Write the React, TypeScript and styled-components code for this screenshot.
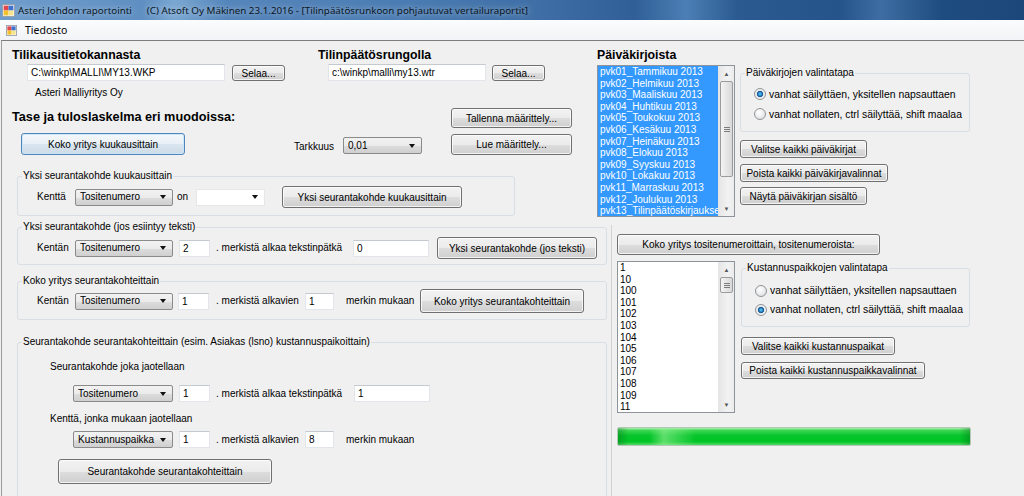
import React from 'react'
import styled, { createGlobalStyle, css } from 'styled-components'

const GlobalStyle = createGlobalStyle`
  * { box-sizing: border-box; }
  html, body {
    margin: 0;
    padding: 0;
    width: 1024px;
    height: 496px;
    overflow: hidden;
    background: #f0f0f0;
  }
  body {
    font-family: 'Liberation Sans', Arial, sans-serif;
    font-size: 10px;
    color: #000;
  }
`

const journals = [
  'pvk01_Tammikuu 2013',
  'pvk02_Helmikuu 2013',
  'pvk03_Maaliskuu 2013',
  'pvk04_Huhtikuu 2013',
  'pvk05_Toukokuu 2013',
  'pvk06_Kesäkuu 2013',
  'pvk07_Heinäkuu 2013',
  'pvk08_Elokuu 2013',
  'pvk09_Syyskuu 2013',
  'pvk10_Lokakuu 2013',
  'pvk11_Marraskuu 2013',
  'pvk12_Joulukuu 2013',
  'pvk13_Tilinpäätöskirjaukse',
]

const costCenters = ['1', '10', '100', '101', '102', '103', '104', '105', '106', '107', '108', '109', '11']

const AppIcon = ({ size }: { size: number }) => (
  <svg width={size} height={size} viewBox="0 0 12 12">
    <rect x="0.5" y="0.5" width="11" height="11" fill="#fff" stroke="#9aa3ad" />
    <rect x="1.5" y="1.5" width="4.5" height="4.5" fill="#e2474b" />
    <rect x="6" y="1.5" width="4.5" height="4.5" fill="#3d73cf" />
    <rect x="1.5" y="6" width="4.5" height="4.5" fill="#f2c12e" />
    <rect x="6" y="6" width="4.5" height="4.5" fill="#f7e58d" />
  </svg>
)

export default function App() {
  return (
    <>
      <GlobalStyle />
      <Window>
        <TitleBar>
          <AppIcon size={13} />
          <TitleText>Asteri Johdon raportointi</TitleText>
          <TitleText $ml={12}>
            (C) Atsoft Oy Mäkinen 23.1.2016 - [Tilinpäätösrunkoon pohjautuvat vertailuraportit]
          </TitleText>
        </TitleBar>
        <MenuBar>
          <AppIcon size={11} />
          <MenuItem>Tiedosto</MenuItem>
        </MenuBar>

        <Client>
          <TopSection>
            <LeftTop>
              <FileRow>
                <FileBlock $w={306}>
                  <Heading $size={12.3}>Tilikausitietokannasta</Heading>
                  <PathRow $indent={15}>
                    <TextBox $w={198}>{'C:\\winkp\\MALLI\\MY13.WKP'}</TextBox>
                    <Button $w={53} $h={16} $ml={7} $mt={1}>Selaa...</Button>
                  </PathRow>
                </FileBlock>
                <FileBlock>
                  <Heading $size={12.3}>Tilinpäätösrungolla</Heading>
                  <PathRow $indent={10}>
                    <TextBox $w={158}>{'c:\\winkp\\malli\\my13.wtr'}</TextBox>
                    <Button $w={53} $h={16} $ml={6} $mt={1}>Selaa...</Button>
                  </PathRow>
                </FileBlock>
              </FileRow>

              <CompanyName>Asteri Malliyritys Oy</CompanyName>

              <ActionRow>
                <Heading $size={12.7} $mt={2}>Tase ja tuloslaskelma eri muodoissa:</Heading>
                <Button $w={121} $h={20}>Tallenna määrittely...</Button>
              </ActionRow>

              <CommandRow>
                <Button $w={164} $h={22} $ml={9} $primary>Koko yritys kuukausittain</Button>
                <Label $w={49} $ml={109} $mt={6}>Tarkkuus</Label>
                <Combo $w={79} $mt={3}>
                  <ComboText>0,01</ComboText>
                  <ComboArrow />
                </Combo>
                <Button $w={121} $h={21} $ml={29}>Lue määrittely...</Button>
              </CommandRow>

              <GroupBox $w={498} $mt={15} $ml={5} $pb={7}>
                <Legend>Yksi seurantakohde kuukausittain</Legend>
                <GroupRow $pt={4} $pl={19}>
                  <Label $w={38}>Kenttä</Label>
                  <Combo $w={98}>
                    <ComboText>Tositenumero</ComboText>
                    <ComboArrow />
                  </Combo>
                  <Label $w={11} $ml={4}>on</Label>
                  <Combo $w={69} $ml={8} $editable>
                    <ComboText />
                    <ComboArrow />
                  </Combo>
                  <Button $w={180} $h={22} $ml={17}>Yksi seurantakohde kuukausittain</Button>
                </GroupRow>
              </GroupBox>
            </LeftTop>

            <RightTop>
              <Heading $size={12.3}>Päiväkirjoista</Heading>
              <ListRow $mt={3}>
                <ListBox $w={138}>
                  <ListItems>
                    {journals.map((name) => (
                      <ListItem key={name} $selected>
                        {name}
                      </ListItem>
                    ))}
                  </ListItems>
                  <ScrollBar>
                    <ScrollArrow>▲</ScrollArrow>
                    <ScrollTrack>
                      <Thumb $top={0} $h={96}>
                        <Grip />
                      </Thumb>
                    </ScrollTrack>
                    <ScrollArrow>▼</ScrollArrow>
                  </ScrollBar>
                </ListBox>
                <SideColumn $ml={5} $pt={2}>
                  <GroupBox $w={230} $pb={7}>
                    <Legend>Päiväkirjojen valintatapa</Legend>
                    <RadioList $pt={5}>
                      <RadioRow $h={20}>
                        <RadioDot $checked />
                        vanhat säilyttäen, yksitellen napsauttaen
                      </RadioRow>
                      <RadioRow $h={20}>
                        <RadioDot />
                        vanhat nollaten, ctrl säilyttää, shift maalaa
                      </RadioRow>
                    </RadioList>
                  </GroupBox>
                  <Button $w={127} $h={18} $mt={8}>Valitse kaikki päiväkirjat</Button>
                  <Button $w={148} $h={18} $mt={6}>Poista kaikki päiväkirjavalinnat</Button>
                  <Button $w={127} $h={18} $mt={5}>Näytä päiväkirjan sisältö</Button>
                </SideColumn>
              </ListRow>
            </RightTop>
          </TopSection>

          <BottomSection>
            <LeftBottom>
              <GroupBox $w={590} $pb={5}>
                <Legend>Yksi seurantakohde (jos esiintyy teksti)</Legend>
                <GroupRow $pt={4} $pl={19}>
                  <Label $w={38}>Kentän</Label>
                  <Combo $w={98}>
                    <ComboText>Tositenumero</ComboText>
                    <ComboArrow />
                  </Combo>
                  <TextBox $w={31} $ml={6}>2</TextBox>
                  <Label $w={130} $ml={6}>. merkistä alkaa tekstinpätkä</Label>
                  <TextBox $w={76} $ml={7}>0</TextBox>
                  <Button $w={160} $h={22} $ml={8}>Yksi seurantakohde (jos teksti)</Button>
                </GroupRow>
              </GroupBox>

              <GroupBox $w={590} $mt={10} $pb={6}>
                <Legend>Koko yritys seurantakohteittain</Legend>
                <GroupRow $pt={2} $pl={19}>
                  <Label $w={38}>Kentän</Label>
                  <Combo $w={98}>
                    <ComboText>Tositenumero</ComboText>
                    <ComboArrow />
                  </Combo>
                  <TextBox $w={31} $ml={5}>1</TextBox>
                  <Label $w={82} $ml={7}>. merkistä alkavien</Label>
                  <TextBox $w={29} $ml={7}>1</TextBox>
                  <Label $w={65} $ml={12}>merkin mukaan</Label>
                  <Button $w={164} $h={24} $ml={9}>Koko yritys seurantakohteittain</Button>
                </GroupRow>
              </GroupBox>

              <GroupBox $w={590} $mt={16} $pb={20}>
                <Legend>Seurantakohde seurantakohteittain (esim. Asiakas (lsno) kustannuspaikoittain)</Legend>
                <SubLabel $mt={13}>Seurantakohde joka jaotellaan</SubLabel>
                <GroupRow $pt={12} $pl={55}>
                  <Combo $w={100}>
                    <ComboText>Tositenumero</ComboText>
                    <ComboArrow />
                  </Combo>
                  <TextBox $w={31} $ml={6}>1</TextBox>
                  <Label $w={130} $ml={6}>. merkistä alkaa tekstinpätkä</Label>
                  <TextBox $w={76} $ml={8}>1</TextBox>
                </GroupRow>
                <SubLabel $mt={11}>Kenttä, jonka mukaan jaotellaan</SubLabel>
                <GroupRow $pt={6} $pl={55}>
                  <Combo $w={100}>
                    <ComboText>Kustannuspaikka</ComboText>
                    <ComboArrow />
                  </Combo>
                  <TextBox $w={31} $ml={6}>1</TextBox>
                  <Label $w={82} $ml={6}>. merkistä alkavien</Label>
                  <TextBox $w={29} $ml={7}>8</TextBox>
                  <Label $w={65} $ml={12}>merkin mukaan</Label>
                </GroupRow>
                <Button $w={214} $h={25} $ml={40} $mt={11}>Seurantakohde seurantakohteittain</Button>
              </GroupBox>
            </LeftBottom>

            <RightBottom>
              <Button $w={263} $h={21}>Koko yritys tositenumeroittain, tositenumeroista:</Button>
              <ListRow $mt={6}>
                <ListBox $w={118}>
                  <ListItems>
                    {costCenters.map((code) => (
                      <ListItem key={code}>{code}</ListItem>
                    ))}
                  </ListItems>
                  <ScrollBar>
                    <ScrollArrow>▲</ScrollArrow>
                    <ScrollTrack>
                      <Thumb $top={0} $h={16}>
                        <Grip />
                      </Thumb>
                    </ScrollTrack>
                    <ScrollArrow>▼</ScrollArrow>
                  </ScrollBar>
                </ListBox>
                <SideColumn $ml={6} $pt={1}>
                  <GroupBox $w={229} $pb={7}>
                    <Legend>Kustannuspaikkojen valintatapa</Legend>
                    <RadioList $pt={7}>
                      <RadioRow $h={19}>
                        <RadioDot />
                        vanhat säilyttäen, yksitellen napsauttaen
                      </RadioRow>
                      <RadioRow $h={19}>
                        <RadioDot $checked />
                        vanhat nollaten, ctrl säilyttää, shift maalaa
                      </RadioRow>
                    </RadioList>
                  </GroupBox>
                  <Button $w={154} $h={18} $mt={10}>Valitse kaikki kustannuspaikat</Button>
                  <Button $w={184} $h={17} $mt={7}>Poista kaikki kustannuspaikkavalinnat</Button>
                </SideColumn>
              </ListRow>
              <ProgressBar />
            </RightBottom>
          </BottomSection>
        </Client>
      </Window>
    </>
  )
}

const Window = styled.div`
  display: flex;
  flex-direction: column;
  width: 1024px;
  height: 496px;
  overflow: hidden;
`

const TitleBar = styled.header`
  height: 20px;
  flex-shrink: 0;
  display: flex;
  align-items: center;
  padding-left: 2px;
  gap: 3px;
  background: linear-gradient(
    90deg,
    #6f9dcc 0%,
    #5f8fc2 14%,
    #7aa7d2 17%,
    #5586bb 22%,
    #4a7bb2 40%,
    #3f6fa6 52%,
    #2f5f96 62%,
    #4c7fb5 67%,
    #2a5a90 72%,
    #25548a 82%,
    #3d6da2 86%,
    #1f4c80 92%,
    #1c477a 100%
  );
`

const TitleText = styled.span<{ $ml?: number }>`
  margin-left: ${(p) => p.$ml ?? 0}px;
  font-family: 'Noto Sans', 'Open Sans', sans-serif;
  font-size: 9.8px;
  color: #0b1624;
  white-space: nowrap;
  text-shadow: 0 0 6px rgba(255, 255, 255, 0.7);
`

const MenuBar = styled.nav`
  height: 20px;
  flex-shrink: 0;
  display: flex;
  align-items: center;
  padding-left: 6px;
  gap: 8px;
  background: linear-gradient(#fbfcfd, #f1f3f6);
`

const MenuItem = styled.span`
  font-family: 'Noto Sans', 'Open Sans', sans-serif;
  font-size: 10.5px;
  color: #000;
`

const Client = styled.main`
  flex: 1;
  min-height: 0;
  display: flex;
  flex-direction: column;
  margin-left: 1px;
  border-top: 1px solid #7d7d7d;
  border-left: 1px solid #9c9c9c;
  background: #f0f0f0;
`

const TopSection = styled.section`
  height: 178px;
  flex-shrink: 0;
  display: flex;
`

const LeftTop = styled.div`
  width: 588px;
  flex-shrink: 0;
  padding: 7px 0 0 10px;
  display: flex;
  flex-direction: column;
`

const RightTop = styled.div`
  flex: 1;
  padding: 7px 0 0 7px;
  display: flex;
  flex-direction: column;
`

const BottomSection = styled.section`
  flex: 1;
  min-height: 0;
  display: flex;
`

const LeftBottom = styled.div`
  width: 605px;
  flex-shrink: 0;
  padding: 2px 0 0 15px;
  display: flex;
  flex-direction: column;
`

const RightBottom = styled.div`
  flex: 1;
  margin: 6px 0 0 4px;
  padding: 9px 0 0 5px;
  border-left: 1px solid #d2d2d2;
  display: flex;
  flex-direction: column;
`

const FileRow = styled.div`
  display: flex;
`

const FileBlock = styled.div<{ $w?: number }>`
  width: ${(p) => (p.$w ? `${p.$w}px` : 'auto')};
  display: flex;
  flex-direction: column;
`

const Heading = styled.div<{ $size: number; $mt?: number }>`
  margin-top: ${(p) => p.$mt ?? 0}px;
  font-weight: bold;
  font-size: ${(p) => p.$size}px;
  line-height: 14px;
  height: 14px;
  white-space: nowrap;
`

const PathRow = styled.div<{ $indent: number }>`
  display: flex;
  align-items: flex-start;
  margin: 2px 0 0 ${(p) => p.$indent}px;
`

const CompanyName = styled.div`
  margin: 6px 0 0 23px;
  line-height: 12px;
`

const ActionRow = styled.div`
  display: grid;
  grid-template-columns: 439px 121px;
  align-items: start;
  margin-top: 9px;
`

const CommandRow = styled.div`
  display: flex;
  align-items: center;
  height: 22px;
  margin-top: 5px;
`

const GroupRow = styled.div<{ $pt: number; $pl: number }>`
  display: flex;
  align-items: center;
  padding: ${(p) => p.$pt}px 0 0 ${(p) => p.$pl}px;
`

const SubLabel = styled.div<{ $mt: number }>`
  margin: ${(p) => p.$mt}px 0 0 32px;
  line-height: 12px;
`

const Label = styled.span<{ $w: number; $ml?: number; $mt?: number }>`
  flex-shrink: 0;
  width: ${(p) => p.$w}px;
  margin-left: ${(p) => p.$ml ?? 0}px;
  margin-top: ${(p) => p.$mt ?? 0}px;
  line-height: 12px;
  white-space: nowrap;
`

const Button = styled.div<{
  $w: number
  $h: number
  $ml?: number
  $mt?: number
  $primary?: boolean
}>`
  flex-shrink: 0;
  width: ${(p) => p.$w}px;
  height: ${(p) => p.$h}px;
  margin-left: ${(p) => p.$ml ?? 0}px;
  margin-top: ${(p) => p.$mt ?? 0}px;
  display: flex;
  align-items: center;
  justify-content: center;
  border: 1px solid #707070;
  border-radius: 3px;
  background: linear-gradient(#f2f2f2 0%, #ebebeb 50%, #dddddd 51%, #cfcfcf 100%);
  box-shadow: inset 0 0 0 1px rgba(255, 255, 255, 0.75);
  white-space: nowrap;
  ${(p) =>
    p.$primary &&
    css`
      border-color: #4f87bd;
      background: linear-gradient(#f4f8fb 0%, #e9f0f6 50%, #dae6ef 51%, #cddbe7 100%);
      box-shadow: inset 0 0 0 1px rgba(200, 230, 250, 0.9);
    `}
`

const TextBox = styled.div<{ $w: number; $ml?: number }>`
  flex-shrink: 0;
  width: ${(p) => p.$w}px;
  height: 17px;
  margin-left: ${(p) => p.$ml ?? 0}px;
  padding: 1px 3px;
  background: #fff;
  border: 1px solid #e2e5ea;
  border-top-color: #c5c9d0;
  line-height: 13px;
  white-space: nowrap;
  overflow: hidden;
`

const Combo = styled.div<{ $w: number; $ml?: number; $mt?: number; $editable?: boolean }>`
  flex-shrink: 0;
  width: ${(p) => p.$w}px;
  height: 17px;
  margin-left: ${(p) => p.$ml ?? 0}px;
  margin-top: ${(p) => p.$mt ?? 0}px;
  display: flex;
  align-items: center;
  padding: 0 6px 0 4px;
  border: 1px solid #8a8a8a;
  border-radius: 2px;
  background: linear-gradient(#f2f2f2 0%, #ebebeb 50%, #dddddd 51%, #cfcfcf 100%);
  ${(p) =>
    p.$editable &&
    css`
      border-color: #e4e6ea;
      border-radius: 0;
      background: #fff;
    `}
`

const ComboText = styled.span`
  flex: 1;
  line-height: 12px;
  white-space: nowrap;
  overflow: hidden;
`

const ComboArrow = styled.span`
  width: 0;
  height: 0;
  border-left: 3.5px solid transparent;
  border-right: 3.5px solid transparent;
  border-top: 4px solid #111;
`

const GroupBox = styled.fieldset<{ $w: number; $mt?: number; $ml?: number; $pb?: number }>`
  flex-shrink: 0;
  width: ${(p) => p.$w}px;
  min-width: 0;
  margin: ${(p) => p.$mt ?? 0}px 0 0 ${(p) => p.$ml ?? 0}px;
  padding: 0 0 ${(p) => p.$pb ?? 0}px 0;
  border: 1px solid #d8dee3;
  border-radius: 3px;
`

const Legend = styled.legend`
  margin-left: 4px;
  padding: 0 1px;
  line-height: 12px;
  font-size: 10px;
`

const RadioList = styled.div<{ $pt: number }>`
  padding-top: ${(p) => p.$pt}px;
`

const RadioRow = styled.div<{ $h: number }>`
  height: ${(p) => p.$h}px;
  display: flex;
  align-items: center;
  padding-left: 13px;
  gap: 3px;
  font-size: 10.4px;
  white-space: nowrap;
`

const RadioDot = styled.span<{ $checked?: boolean }>`
  width: 12px;
  height: 12px;
  border-radius: 50%;
  border: 1px solid #8f9497;
  background: radial-gradient(circle at 40% 35%, #ffffff 0%, #f1f1f1 40%, #d4d6d8 100%);
  ${(p) =>
    p.$checked &&
    css`
      background: radial-gradient(
        circle at 50% 50%,
        #6fd0f5 0%,
        #2a8fcf 22%,
        #14508a 40%,
        #dfe3e7 46%,
        #f4f4f4 70%,
        #d2d5d8 100%
      );
    `}
`

const ListRow = styled.div<{ $mt: number }>`
  display: flex;
  align-items: flex-start;
  margin-top: ${(p) => p.$mt}px;
`

const SideColumn = styled.div<{ $ml: number; $pt: number }>`
  display: flex;
  flex-direction: column;
  align-items: flex-start;
  margin-left: ${(p) => p.$ml}px;
  padding-top: ${(p) => p.$pt}px;
`

const ListBox = styled.div<{ $w: number }>`
  flex-shrink: 0;
  width: ${(p) => p.$w}px;
  height: 152px;
  display: flex;
  background: #fff;
  border: 1px solid #8e949a;
`

const ListItems = styled.div`
  flex: 1;
  min-width: 0;
  overflow: hidden;
`

const ListItem = styled.div<{ $selected?: boolean }>`
  height: 11.6px;
  line-height: 11.6px;
  padding-left: 2px;
  white-space: nowrap;
  overflow: hidden;
  ${(p) =>
    p.$selected &&
    css`
      background: #3399ff;
      color: #fff;
    `}
`

const ScrollBar = styled.div`
  width: 16px;
  flex-shrink: 0;
  display: flex;
  flex-direction: column;
  background: linear-gradient(90deg, #e6e6e6, #f2f2f2 60%, #ececec);
  border-left: 1px solid #e4e4e4;
`

const ScrollArrow = styled.div`
  height: 15px;
  display: flex;
  align-items: center;
  justify-content: center;
  font-size: 6px;
  color: #555;
`

const ScrollTrack = styled.div`
  flex: 1;
  padding: 0 1px;
`

const Thumb = styled.div<{ $top: number; $h: number }>`
  margin-top: ${(p) => p.$top}px;
  height: ${(p) => p.$h}px;
  display: flex;
  align-items: center;
  justify-content: center;
  border: 1px solid #9b9b9b;
  border-radius: 2px;
  background: linear-gradient(90deg, #f4f4f4, #e6e6e6 50%, #d8d8d8);
`

const Grip = styled.span`
  width: 6px;
  height: 5px;
  background: repeating-linear-gradient(#7c7c7c 0 1px, transparent 1px 2px);
`

const ProgressBar = styled.div`
  width: 354px;
  height: 19px;
  margin-top: 14px;
  border: 1px solid #b4c8b6;
  border-radius: 2px;
  background:
    linear-gradient(90deg, transparent 9%, rgba(150, 240, 150, 0.6) 13%, transparent 22%),
    linear-gradient(90deg, rgba(0, 80, 20, 0.3) 0, transparent 3%, transparent 97%, rgba(0, 80, 20, 0.3) 100%),
    linear-gradient(#a9efaf 0%, #3ad650 15%, #06c52a 45%, #00c426 80%, #55d966 100%);
`
